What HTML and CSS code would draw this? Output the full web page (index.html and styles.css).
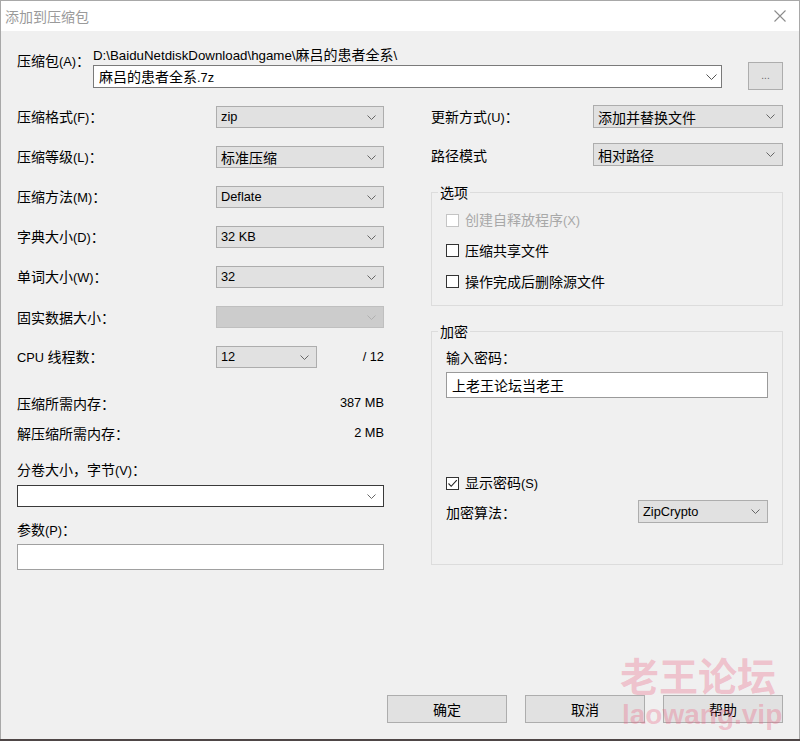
FILE: index.html
```html
<!DOCTYPE html>
<html lang="zh-CN">
<head>
<meta charset="utf-8">
<title>添加到压缩包</title>
<link rel="stylesheet" href="styles.css">
</head>
<body>
<div class="window">
  <div class="titlebar">
    <span class="title">添加到压缩包</span>
    <svg class="close" width="12" height="12" viewBox="0 0 12 12"><path d="M0.5 0.5L11.5 11.5M11.5 0.5L0.5 11.5" stroke="#8c8c8c" stroke-width="1.1" fill="none"/></svg>
  </div>
  <div class="content">
    <div class="archive">
      <div class="archive-label">压缩包<span class="en">(A)</span>：</div>
      <div class="archive-main">
        <div class="path"><span class="en">D:\BaiduNetdiskDownload\hgame\</span>麻吕的患者全系<span class="en">\</span></div>
        <div class="combo edit archive-combo"><span>麻吕的患者全系<span class="en">.7z</span></span><svg class="chev big" width="11" height="6" viewBox="0 0 11 6"><path d="M0.5 0.5L5.5 5.5L10.5 0.5" fill="none" stroke="#555"/></svg></div>
      </div>
      <div class="btn browse"><span class="en">...</span></div>
    </div>

    <div class="columns">
      <div class="col left">
        <div class="row"><span class="lbl">压缩格式<span class="en">(F)</span>：</span><div class="combo w168"><span class="en">zip</span><svg class="chev" width="9" height="5" viewBox="0 0 9 5"><path d="M0.5 0.5L4.5 4.5L8.5 0.5" fill="none" stroke="#666"/></svg></div></div>
        <div class="row"><span class="lbl">压缩等级<span class="en">(L)</span>：</span><div class="combo w168"><span>标准压缩</span><svg class="chev" width="9" height="5" viewBox="0 0 9 5"><path d="M0.5 0.5L4.5 4.5L8.5 0.5" fill="none" stroke="#666"/></svg></div></div>
        <div class="row"><span class="lbl">压缩方法<span class="en">(M)</span>：</span><div class="combo w168"><span class="en">Deflate</span><svg class="chev" width="9" height="5" viewBox="0 0 9 5"><path d="M0.5 0.5L4.5 4.5L8.5 0.5" fill="none" stroke="#666"/></svg></div></div>
        <div class="row"><span class="lbl">字典大小<span class="en">(D)</span>：</span><div class="combo w168"><span class="en">32 KB</span><svg class="chev" width="9" height="5" viewBox="0 0 9 5"><path d="M0.5 0.5L4.5 4.5L8.5 0.5" fill="none" stroke="#666"/></svg></div></div>
        <div class="row"><span class="lbl">单词大小<span class="en">(W)</span>：</span><div class="combo w168"><span class="en">32</span><svg class="chev" width="9" height="5" viewBox="0 0 9 5"><path d="M0.5 0.5L4.5 4.5L8.5 0.5" fill="none" stroke="#666"/></svg></div></div>
        <div class="row"><span class="lbl">固实数据大小：</span><div class="combo w168 disabled"><span></span><svg class="chev" width="9" height="5" viewBox="0 0 9 5"><path d="M0.5 0.5L4.5 4.5L8.5 0.5" fill="none" stroke="#b0b0b0"/></svg></div></div>
        <div class="row"><span class="lbl"><span class="en">CPU </span>线程数：</span><div class="combo w101"><span class="en">12</span><svg class="chev" width="9" height="5" viewBox="0 0 9 5"><path d="M0.5 0.5L4.5 4.5L8.5 0.5" fill="none" stroke="#666"/></svg></div><span class="total en">/ 12</span></div>
        <div class="mem mem1"><span>压缩所需内存：</span><span class="en">387 MB</span></div>
        <div class="mem mem2"><span>解压缩所需内存：</span><span class="en">2 MB</span></div>
        <div class="field-label vol-label">分卷大小，字节<span class="en">(V)</span>：</div>
        <div class="combo edit dark full"><span></span><svg class="chev" width="9" height="5" viewBox="0 0 9 5"><path d="M0.5 0.5L4.5 4.5L8.5 0.5" fill="none" stroke="#666"/></svg></div>
        <div class="field-label param-label">参数<span class="en">(P)</span>：</div>
        <div class="textbox param"></div>
      </div>

      <div class="col right">
        <div class="rrow"><span class="lbl">更新方式<span class="en">(U)</span>：</span><div class="combo w190"><span>添加并替换文件</span><svg class="chev" width="9" height="5" viewBox="0 0 9 5"><path d="M0.5 0.5L4.5 4.5L8.5 0.5" fill="none" stroke="#666"/></svg></div></div>
        <div class="rrow second"><span class="lbl">路径模式</span><div class="combo w190"><span>相对路径</span><svg class="chev" width="9" height="5" viewBox="0 0 9 5"><path d="M0.5 0.5L4.5 4.5L8.5 0.5" fill="none" stroke="#666"/></svg></div></div>

        <fieldset class="group options">
          <legend>选项</legend>
          <div class="check disabled c1"><span class="box"></span><span>创建自释放程序<span class="en">(X)</span></span></div>
          <div class="check c2"><span class="box"></span><span>压缩共享文件</span></div>
          <div class="check c3"><span class="box"></span><span>操作完成后删除源文件</span></div>
        </fieldset>

        <fieldset class="group encrypt">
          <legend>加密</legend>
          <div class="pw-label">输入密码：</div>
          <div class="textbox pw">上老王论坛当老王</div>
          <div class="check show"><span class="box checked"><svg width="11" height="11" viewBox="0 0 11 11"><path d="M1.5 5.5L4.2 8.3L9.8 2.2" fill="none" stroke="#222" stroke-width="1.1"/></svg></span><span>显示密码<span class="en">(S)</span></span></div>
          <div class="algo"><span>加密算法：</span><div class="combo w130"><span class="en">ZipCrypto</span><svg class="chev" width="9" height="5" viewBox="0 0 9 5"><path d="M0.5 0.5L4.5 4.5L8.5 0.5" fill="none" stroke="#666"/></svg></div></div>
        </fieldset>
      </div>
    </div>

    <div class="buttons">
      <div class="btn action">确定</div>
      <div class="btn action">取消</div>
      <div class="btn action">帮助</div>
    </div>
  </div>
  <div class="watermark">
    <div class="wm-cn">老王论坛</div>
    <div class="wm-en">laowang.vip</div>
  </div>
</div>
</body>
</html>
```

FILE: styles.css
```css
* { box-sizing: border-box; }
html, body { margin: 0; padding: 0; }
body {
  width: 800px;
  height: 741px;
  overflow: hidden;
  background: #4e4646;
  font-family: "Noto Sans CJK SC", "Noto Sans", sans-serif;
  font-size: 14px;
  line-height: 18px;
  color: #000;
}
.en {
  font-family: "Liberation Sans", Arial, sans-serif;
  font-size: 12.8px;
}
.window {
  position: relative;
  width: 800px;
  height: 739px;
  background: #f0f0f0;
  border: 1px solid #a8a8a8;
  border-bottom: none;
  display: flex;
  flex-direction: column;
}
.titlebar {
  height: 30px;
  flex: none;
  background: #fff;
  display: flex;
  align-items: center;
  justify-content: space-between;
  padding: 0 13px 0 4px;
}
.title { color: #9a9a9a; font-size: 14px; }
.close { display: block; }

.content {
  flex: 1;
  display: flex;
  flex-direction: column;
  padding: 14px 16px 16px 16px;
}

/* archive row */
.archive { display: flex; height: 45px; }
.archive-label { width: 76px; padding-top: 6px; }
.archive-main { width: 629px; }
.path { height: 18px; margin-bottom: 2px; white-space: nowrap; }
.path .en { font-size: 13.3px; }
.browse {
  margin-left: auto;
  margin-top: 17px;
  width: 35px;
  height: 28px;
  color: #666;
}
.browse .en { font-size: 10px; }

.combo {
  display: flex;
  align-items: center;
  justify-content: space-between;
  height: 22px;
  padding: 0 7px 0 4px;
  background: #e1e1e1;
  border: 1px solid #adadad;
  white-space: nowrap;
}
.chev { display: block; flex: none; }
.combo.edit { background: #fff; border-color: #7a7a7a; }
.combo.dark { border-color: #3a3a3a; }
.archive-combo { height: 23px; padding-left: 5px; padding-right: 4px; }
.combo.disabled { background: #cccccc; border-color: #bfbfbf; }
.w168 { width: 168px; }
.w101 { width: 101px; }
.w190 { width: 190px; height: 23px; }
.w130 { width: 130px; height: 23px; }
.full { width: 100%; }

.textbox {
  background: #fff;
  border: 1px solid #a0a0a0;
  height: 26px;
}

/* columns */
.columns { display: flex; gap: 47px; margin-top: 15px; }
.col { display: flex; flex-direction: column; }
.left { width: 367px; padding-top: 1px; }
.right { width: 352px; }

.row { display: flex; align-items: center; height: 22px; margin-bottom: 18px; }
.row:nth-child(7) { margin-bottom: 0; }
.row .lbl { width: 199px; flex: none; }
.total { margin-left: auto; }

.mem { display: flex; justify-content: space-between; align-items: center; height: 20px; line-height: 20px; }
.mem1 { margin-top: 25px; }
.mem2 { margin-top: 10px; }
.field-label { height: 20px; line-height: 20px; }
.vol-label { margin-top: 16px; margin-bottom: 6px; }
.param-label { margin-top: 12px; margin-bottom: 5px; }

.rrow { display: flex; align-items: center; justify-content: space-between; height: 23px; }
.rrow.second { margin-top: 15px; }

.group {
  margin: 0;
  padding: 0 14px 14px 14px;
  border: 1px solid #dcdcdc;
  min-width: 0;
}
.group legend {
  padding: 0 2px;
  margin-left: -8px;
  line-height: 18px;
}
.options { margin-top: 17px; }
.encrypt { margin-top: 16px; padding-bottom: 41px; }

.check { display: flex; align-items: center; height: 20px; gap: 6px; }
.check .box {
  width: 13px;
  height: 13px;
  flex: none;
  border: 1px solid #333;
  background: #fff;
  display: flex;
  align-items: center;
  justify-content: center;
}
.check.disabled { color: #a8a8a8; }
.check.disabled .box { border-color: #c4c4c4; }
.c1 { margin-top: 9px; }
.c2 { margin-top: 10px; }
.c3 { margin-top: 11px; }
.box svg { display: block; }

.pw-label { height: 20px; line-height: 20px; margin-top: 7px; }
.pw { margin-top: 5px; padding-left: 5px; line-height: 24px; border-color: #9a9a9a; }
.show { margin-top: 75px; }
.algo { display: flex; align-items: center; justify-content: space-between; margin-top: 7px; height: 23px; }

/* buttons */
.btn {
  display: flex;
  align-items: center;
  justify-content: center;
  background: #e1e1e1;
  border: 1px solid #adadad;
}
.buttons {
  margin-top: auto;
  display: flex;
  justify-content: flex-end;
  gap: 18px;
}
.action { width: 120px; height: 28px; }

/* watermark overlay */
.watermark {
  position: absolute;
  left: 619px;
  top: 652px;
  pointer-events: none;
  color: rgba(236, 96, 128, 0.33);
  font-weight: bold;
}
.wm-cn {
  font-family: "Noto Sans CJK SC", sans-serif;
  font-size: 39px;
  line-height: 42px;
}
.wm-en {
  font-family: "Liberation Sans", Arial, sans-serif;
  font-size: 28px;
  line-height: 28px;
  margin-top: 6px;
  margin-left: 2px;
}
```
